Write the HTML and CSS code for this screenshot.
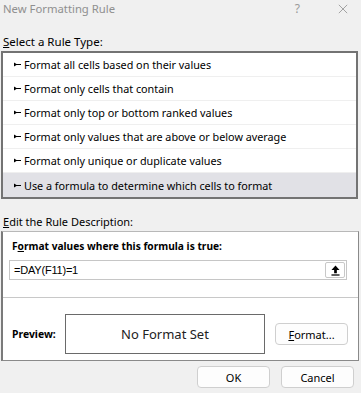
FILE: index.html
```html
<!DOCTYPE html>
<html lang="en">
<head>
  <meta charset="UTF-8" />
  <title>New Formatting Rule</title>
  <link rel="stylesheet" href="styles.css">
</head>
<body>
  <div class="titlebar">
    <span class="title">New Formatting Rule</span>
    <span class="help">?</span>
    <svg class="close" viewBox="0 0 12 12"><path d="M1 1L11 11M11 1L1 11"/></svg>
  </div>

  <div class="label select-label"><u>S</u>elect a Rule Type:</div>

  <div class="rule-list">
    <div class="rule"><svg class="marker" viewBox="0 0 9 6"><path d="M0 0.3V5.7L3.2 3.7H9V2.3H3.2Z"/></svg>Format all cells based on their values</div>
    <div class="rule"><svg class="marker" viewBox="0 0 9 6"><path d="M0 0.3V5.7L3.2 3.7H9V2.3H3.2Z"/></svg>Format only cells that contain</div>
    <div class="rule"><svg class="marker" viewBox="0 0 9 6"><path d="M0 0.3V5.7L3.2 3.7H9V2.3H3.2Z"/></svg>Format only top or bottom ranked values</div>
    <div class="rule"><svg class="marker" viewBox="0 0 9 6"><path d="M0 0.3V5.7L3.2 3.7H9V2.3H3.2Z"/></svg>Format only values that are above or below average</div>
    <div class="rule"><svg class="marker" viewBox="0 0 9 6"><path d="M0 0.3V5.7L3.2 3.7H9V2.3H3.2Z"/></svg>Format only unique or duplicate values</div>
    <div class="rule selected"><svg class="marker" viewBox="0 0 9 6"><path d="M0 0.3V5.7L3.2 3.7H9V2.3H3.2Z"/></svg>Use a formula to determine which cells to format</div>
  </div>

  <div class="label edit-label"><u>E</u>dit the Rule Description:</div>

  <div class="desc-box">
    <div class="formula-label">F<u>o</u>rmat values where this formula is true:</div>
    <div class="formula-input">
      <span class="formula-text">=DAY(F11)=1</span>
      <div class="collapse-btn">
        <svg viewBox="0 0 10 12"><path d="M5 0.5L9.5 5.5H6.5V9H3.5V5.5H0.5Z"/><rect x="0.5" y="10.3" width="9" height="1.4"/></svg>
      </div>
    </div>
    <div class="separator"></div>
    <div class="preview-row">
      <div class="preview-label">Preview:</div>
      <div class="preview-box">No Format Set</div>
      <div class="btn format-btn"><u>F</u>ormat...</div>
    </div>
  </div>

  <div class="footer">
    <div class="btn">OK</div>
    <div class="btn">Cancel</div>
  </div>
</body>
</html>
```

FILE: styles.css
```css
html, body {
  margin: 0;
  padding: 0;
  width: 361px;
  height: 393px;
  overflow: hidden;
  background-color: #f0f0f0;
  font-family: 'Noto Sans', 'Open Sans', sans-serif;
  font-size: 11px;
  color: #000;
}

.titlebar {
  height: 22px;
  display: flex;
  align-items: flex-start;
  padding-left: 3px;
}

.titlebar .title {
  flex: 1;
  line-height: 18px;
  font-size: 11.3px;
  color: #8f8f8f;
}

.titlebar .help {
  line-height: 18px;
  font-size: 12px;
  color: #9a9a9a;
  margin-right: 38px;
}

.titlebar .close {
  width: 10px;
  height: 10px;
  margin: 4px 13px 0 0;
  stroke: #9a9a9a;
  stroke-width: 1.1;
  fill: none;
}

.label {
  line-height: 18px;
  padding-left: 3px;
}

.select-label {
  margin-top: 11px;
  font-size: 11.5px;
}

.rule-list {
  margin-left: 1px;
  width: 353px;
  border: 2px solid #737373;
  background: #fff;
}

.rule {
  height: 23px;
  border-bottom: 1px solid #efefef;
  display: flex;
  align-items: center;
  padding-left: 11px;
  font-size: 10.8px;
}

.rule:last-child {
  border-bottom: none;
  height: 24px;
}

.rule.selected {
  background: #e1e1e6;
}

.marker {
  width: 7px;
  height: 5px;
  fill: #000;
  margin-right: 3px;
}

.edit-label {
  margin-top: 14px;
}

.desc-box {
  margin-left: 1px;
  width: 355px;
  border: 1px solid #8a8a8a;
  border-top-color: #b8b8b8;
  border-left: 2px solid #7a7a7a;
  background: #fff;
  padding-top: 5px;
  padding-bottom: 6px;
}

.formula-label {
  font-weight: bold;
  font-size: 10.2px;
  line-height: 18px;
  padding-left: 9px;
}

.formula-input {
  margin: 5px 0 0 6px;
  width: 336px;
  height: 18px;
  border: 1px solid #c6c6c6;
  display: flex;
  align-items: center;
  justify-content: space-between;
}

.formula-text {
  padding-left: 4px;
  font-family: 'Liberation Sans', Arial, sans-serif;
  font-size: 11px;
  letter-spacing: -0.2px;
}

.collapse-btn {
  width: 18px;
  height: 14px;
  margin-right: 1px;
  border: 1px solid #c8c8c8;
  border-radius: 2px;
  display: flex;
  align-items: center;
  justify-content: center;
}

.collapse-btn svg {
  width: 9px;
  height: 11px;
  fill: #000;
}

.separator {
  margin-top: 17px;
  height: 1px;
  background: #c8c8c8;
}

.preview-row {
  margin-top: 16px;
  display: flex;
  align-items: center;
}

.preview-label {
  width: 53px;
  padding-left: 9px;
  font-weight: bold;
  font-size: 10.4px;
}

.preview-box {
  width: 198px;
  height: 38px;
  border: 1px solid #6a6a6a;
  display: flex;
  align-items: center;
  justify-content: center;
  font-size: 13px;
  color: #222;
}

.btn {
  width: 71px;
  height: 20px;
  border: 1px solid #cfcfcf;
  border-radius: 4px;
  background: #fdfdfd;
  display: flex;
  align-items: center;
  justify-content: center;
}

.format-btn {
  margin-left: 10px;
}

.footer {
  margin-top: 5px;
  display: flex;
  justify-content: flex-end;
  gap: 11px;
  padding-right: 7px;
}
```
